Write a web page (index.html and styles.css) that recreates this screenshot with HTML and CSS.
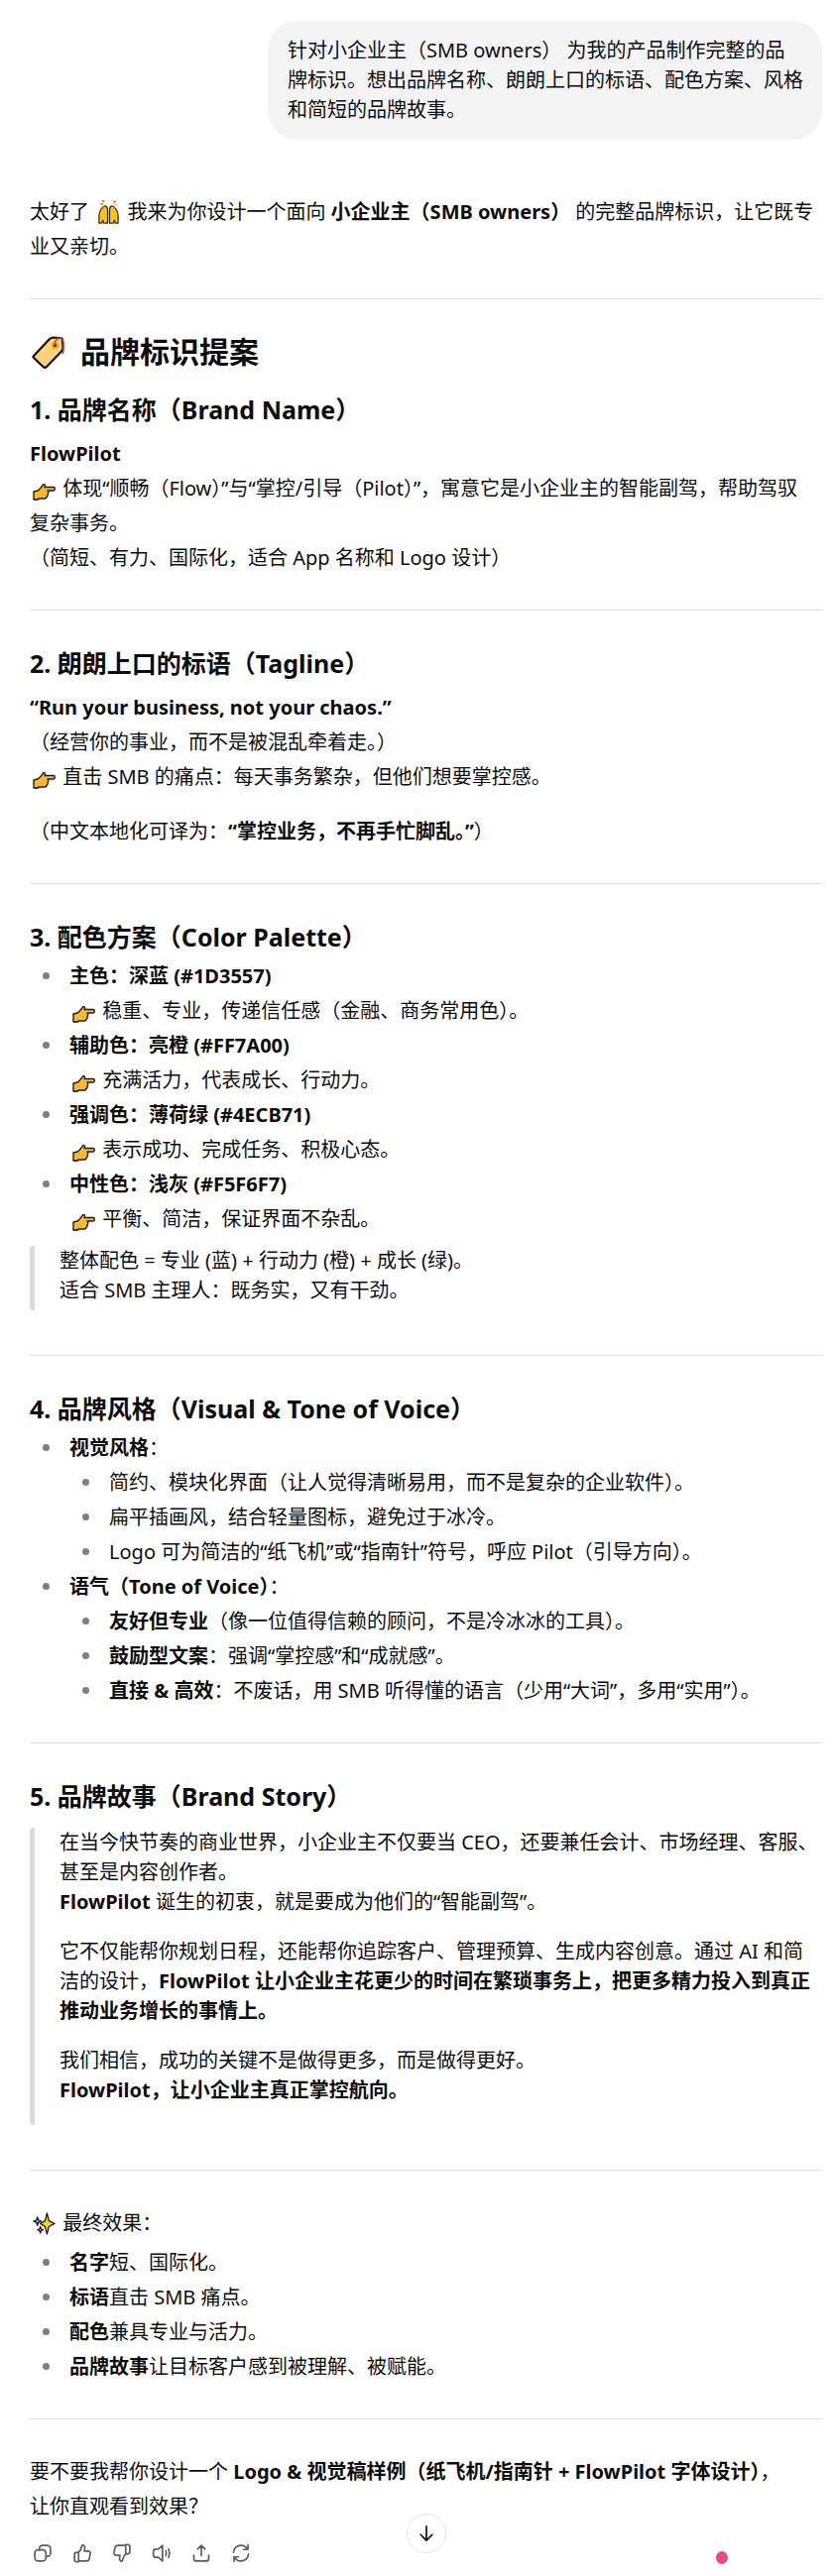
FILE: index.html
```html
<!DOCTYPE html>
<html lang="zh-CN">
<head>
<meta charset="utf-8">
<title>FlowPilot</title>
<link rel="stylesheet" href="styles.css">
</head>
<body>
<svg class="defs" width="0" height="0" aria-hidden="true">
  <defs>
    <symbol id="hand" viewBox="0 0 25 25">
      <g transform="translate(1 7)">
        <path d="M1 16.500h4.500l1.500-1.500" fill="none" stroke="#9a9a9a" stroke-width="1.200"/>
        <path d="M1 8l4-1C7 6 9 3 10.500 1 11.500 0 13 .8 12.500 2.500L12 3.500h9c1.800 0 1.800 3.500 0 3.500h-6c1 1 1 3 0 3.300.5.700.3 2.200-.7 2.700-.3 1.200-.8 2-2.300 2H6l-1 1H1z" fill="#fdb92e" stroke="#1c1c1c" stroke-width="1.400" stroke-linejoin="round"/>
      </g>
    </symbol>
  </defs>
</svg>
<main class="thread">
  <div class="bubble">针对小企业主（SMB owners） 为我的产品制作完整的品牌标识。想出品牌名称、朗朗上口的标语、配色方案、风格和简短的品牌故事。</div>

  <article class="reply">
    <p>太好了 <svg class="emoji" viewBox="0 0 26 26"><path d="M6 5a7 7 0 0 1 14 0" fill="none" stroke="#e8792b" stroke-width="3" stroke-dasharray="2 1.500"/><path d="M3 24v-8c0-4 3-9 6-10 2 0 3 2 3 5v13H8l-1-3-1 3zM23 24v-8c0-4-3-9-6-10-2 0-3 2-3 5v13h4l1-3 1 3z" fill="#fcc21b" stroke="#3a2a10" stroke-width="1.300" stroke-linejoin="round"/></svg> 我来为你设计一个面向 <strong>小企业主（SMB owners）</strong> 的完整品牌标识，让它既专业又亲切。</p>
    <hr>
    <h2><svg class="emoji emoji-large" viewBox="0 0 36 36"><path d="M3 22L19 5c1-1 2-1.500 3.500-1.500L30 4c1.500 0 2 1 2 2.500l.5 7.500c0 1.500-.5 2.500-1.500 3.500L16 33c-1 1-2.500 1-3.500 0L3 24c-.8-.7-.8-1.300 0-2z" fill="#ffd27a" stroke="#111" stroke-width="2.200" stroke-linejoin="round"/><circle cx="24.500" cy="11.500" r="3.500" fill="#e8a020"/><circle cx="24.500" cy="11.500" r="1.500" fill="#3a2a10"/><path d="M24 11c0-7 9-10 9-2 0 3 0 8-.5 11" fill="none" stroke="#d8342a" stroke-width="1.500"/></svg>品牌标识提案</h2>
    <h3>1. 品牌名称（Brand Name）</h3>
    <p><strong>FlowPilot</strong><br><svg class="emoji"><use href="#hand"/></svg> 体现“顺畅（Flow）”与“掌控/引导（Pilot）”，寓意它是小企业主的智能副驾，帮助驾驭<br>复杂事务。<br>（简短、有力、国际化，适合 App 名称和 Logo 设计）</p>
    <hr>
    <h3>2. 朗朗上口的标语（Tagline）</h3>
    <p><strong>“Run your business, not your chaos.”</strong><br>（经营你的事业，而不是被混乱牵着走。）<br><svg class="emoji"><use href="#hand"/></svg> 直击 SMB 的痛点：每天事务繁杂，但他们想要掌控感。</p>
    <p class="spaced">（中文本地化可译为：<strong>“掌控业务，不再手忙脚乱。”</strong>）</p>
    <hr>
    <h3>3. 配色方案（Color Palette）</h3>
    <ul>
      <li><strong>主色：深蓝 (#1D3557)</strong><br><svg class="emoji"><use href="#hand"/></svg> 稳重、专业，传递信任感（金融、商务常用色）。</li>
      <li><strong>辅助色：亮橙 (#FF7A00)</strong><br><svg class="emoji"><use href="#hand"/></svg> 充满活力，代表成长、行动力。</li>
      <li><strong>强调色：薄荷绿 (#4ECB71)</strong><br><svg class="emoji"><use href="#hand"/></svg> 表示成功、完成任务、积极心态。</li>
      <li><strong>中性色：浅灰 (#F5F6F7)</strong><br><svg class="emoji"><use href="#hand"/></svg> 平衡、简洁，保证界面不杂乱。</li>
    </ul>
    <blockquote>
      <p>整体配色 = 专业 (蓝) + 行动力 (橙) + 成长 (绿)。<br>适合 SMB 主理人：既务实，又有干劲。</p>
    </blockquote>
    <hr>
    <h3>4. 品牌风格（Visual &amp; Tone of Voice）</h3>
    <ul>
      <li><strong>视觉风格</strong>：
        <ul>
          <li>简约、模块化界面（让人觉得清晰易用，而不是复杂的企业软件）。</li>
          <li>扁平插画风，结合轻量图标，避免过于冰冷。</li>
          <li>Logo 可为简洁的“纸飞机”或“指南针”符号，呼应 Pilot（引导方向）。</li>
        </ul>
      </li>
      <li><strong>语气（Tone of Voice）</strong>：
        <ul>
          <li><strong>友好但专业</strong>（像一位值得信赖的顾问，不是冷冰冰的工具）。</li>
          <li><strong>鼓励型文案</strong>：强调“掌控感”和“成就感”。</li>
          <li><strong>直接 &amp; 高效</strong>：不废话，用 SMB 听得懂的语言（少用“大词”，多用“实用”）。</li>
        </ul>
      </li>
    </ul>
    <hr>
    <h3>5. 品牌故事（Brand Story）</h3>
    <blockquote class="story">
      <p>在当今快节奏的商业世界，小企业主不仅要当 CEO，还要兼任会计、市场经理、客服、甚至是内容创作者。<br><strong>FlowPilot</strong> 诞生的初衷，就是要成为他们的“智能副驾”。</p>
      <p>它不仅能帮你规划日程，还能帮你追踪客户、管理预算、生成内容创意。通过 AI 和简洁的设计，<strong>FlowPilot 让小企业主花更少的时间在繁琐事务上，把更多精力投入到真正推动业务增长的事情上。</strong></p>
      <p>我们相信，成功的关键不是做得更多，而是做得更好。<br><strong>FlowPilot，让小企业主真正掌控航向。</strong></p>
    </blockquote>
    <hr>
    <p><svg class="emoji" viewBox="0 0 26 26"><path d="M16 2l2 8 6 3-6 3-2 8-2-8-5-3 5-3z" fill="#ffd60a" stroke="#111" stroke-width="1.300" stroke-linejoin="round"/><path d="M6 6l1 3 3 1.500-3 1.500-1 3-1-3-3-1.500 3-1.500z" fill="#35b8e0" stroke="#111" stroke-width="1.200" stroke-linejoin="round"/><path d="M9 16l.8 2.500 2.200 1-2.200 1L9 23l-.8-2.500-2.200-1 2.200-1z" fill="#f28bb0" stroke="#111" stroke-width="1.200" stroke-linejoin="round"/></svg> 最终效果：</p>
    <ul class="tight">
      <li><strong>名字</strong>短、国际化。</li>
      <li><strong>标语</strong>直击 SMB 痛点。</li>
      <li><strong>配色</strong>兼具专业与活力。</li>
      <li><strong>品牌故事</strong>让目标客户感到被理解、被赋能。</li>
    </ul>
    <hr>
    <p>要不要我帮你设计一个 <strong>Logo &amp; 视觉稿样例（纸飞机/指南针 + FlowPilot 字体设计）</strong>，<br>让你直观看到效果？</p>
  </article>

  <div class="actions">
    <svg class="action" viewBox="0 0 24 24"><rect x="2.500" y="8" width="13.500" height="13.500" rx="4"/><path d="M8 8V6.500a4 4 0 0 1 4-4h5.500a4 4 0 0 1 4 4V12a4 4 0 0 1-4 4H16"/></svg>
    <svg class="action" viewBox="0 0 24 24"><path d="M7.500 11c2.500-2 3.500-5 4-8 .2-1.500 4-1 3.500 3l-.5 3.500h4.500c2 0 3 1.500 2.700 3l-1.200 6c-.4 2-1.500 3-3.500 3H7.500zM7.500 11v11.500H5.500a3 3 0 0 1-3-3v-5.500a3 3 0 0 1 3-3z"/></svg>
    <svg class="action" viewBox="0 0 24 24"><path d="M16.500 13c-2.500 2-3.500 5-4 8-.2 1.500-4 1-3.500-3l.5-3.500H5c-2 0-3-1.500-2.700-3l1.200-6c.4-2 1.500-3 3.500-3h9.500zM16.500 13V1.500h2a3 3 0 0 1 3 3V10a3 3 0 0 1-3 3z"/></svg>
    <svg class="action" viewBox="0 0 24 24"><path d="M13 2.500v19L8 17H5a3 3 0 0 1-3-3v-4a3 3 0 0 1 3-3h3zM17 9c.8 2 .8 4 0 6M20.500 7c1.300 3.300 1.300 6.700 0 10"/></svg>
    <svg class="action" viewBox="0 0 24 24"><path d="M12 15V2.500M7.500 7L12 2.500 16.500 7M3 14.500v4a3 3 0 0 0 3 3h12a3 3 0 0 0 3-3v-4"/></svg>
    <svg class="action" viewBox="0 0 24 24"><path d="M3 11c0-5 4-8.500 9-8.500 3.500 0 6 1.500 8 4.500M20.500 2v5.500H15M21 13c0 5-4 8.500-9 8.500-3.500 0-6-1.500-8-4.500M3.500 22v-5.500H9"/></svg>
  </div>
</main>
<button class="scroll-down" type="button" aria-label="scroll to bottom"><svg viewBox="0 0 24 24"><path d="M12 3.500v17M5 13.500l7 7 7-7"/></svg></button>
<span class="dot"></span>
</body>
</html>
```

FILE: styles.css
```css
* {
  box-sizing: border-box;
}

html,
body {
  margin: 0;
  height: 2599px;
  overflow: hidden;
  background: #fff;
}

body {
  position: relative;
  font-family: "Noto Sans", "Noto Sans CJK SC", sans-serif;
  font-size: 20px;
  line-height: 35px;
  color: #0d0d0d;
}

.defs {
  position: absolute;
}

.thread {
  display: flex;
  flex-direction: column;
  padding: 21px 11px 0 30px;
}

.bubble {
  align-self: flex-end;
  width: 559px;
  padding: 15px 19px 15px 20px;
  border-radius: 30px;
  background: #f4f4f4;
  line-height: 30px;
}

.reply {
  margin-top: 55px;
}

p {
  margin: 0;
}

p.spaced {
  margin-top: 20px;
}

hr + p {
  padding-top: 2px;
}

strong {
  font-weight: 700;
}

hr {
  height: 1px;
  margin: 35px 0 33px;
  border: 0;
  background: #dedede;
}

h2 {
  display: flex;
  align-items: center;
  margin: 0 0 18px;
  font-size: 30px;
  line-height: 40px;
  font-weight: 700;
}

h3 {
  margin: 0 0 7px;
  font-size: 25px;
  line-height: 40px;
  font-weight: 700;
}

ul {
  margin: 0;
  padding: 0 0 0 40px;
  list-style: none;
}

li {
  position: relative;
}

li::before {
  content: "";
  position: absolute;
  left: -27px;
  top: 14px;
  width: 7px;
  height: 7px;
  border-radius: 50%;
  background: #808080;
}

h3 + ul {
  margin-top: -5px;
}

ul.tight {
  margin-top: 5px;
}

blockquote {
  margin: 10px 0 45px;
  padding: 0 0 5px 25px;
  border-left: 5px solid #dcdcdc;
  border-radius: 3px;
  line-height: 30px;
}

blockquote p + p {
  margin-top: 20px;
}

blockquote + hr {
  margin-top: 0;
}

h3 + blockquote {
  margin-top: 12px;
}

blockquote.story {
  padding-bottom: 20px;
}

.emoji {
  display: inline-block;
  width: 25px;
  height: 25px;
  margin: 0 1px 0 2px;
  vertical-align: -6px;
}

.emoji-large {
  flex: none;
  width: 36px;
  height: 36px;
  margin: 0 14px 0 1px;
}

.actions {
  display: flex;
  gap: 20px;
  margin-top: 20px;
  padding-left: 3px;
}

.action {
  width: 20px;
  height: 20px;
  fill: none;
  stroke: #5d5d5d;
  stroke-width: 2;
  stroke-linecap: round;
  stroke-linejoin: round;
}

.scroll-down {
  position: absolute;
  left: 410px;
  top: 2536px;
  display: flex;
  align-items: center;
  justify-content: center;
  width: 40px;
  height: 40px;
  padding: 0;
  border: 1px solid #e3e3e3;
  border-radius: 50%;
  background: #fff;
}

.scroll-down svg {
  width: 20px;
  height: 20px;
  fill: none;
  stroke: #0d0d0d;
  stroke-width: 2;
  stroke-linecap: round;
  stroke-linejoin: round;
}

.dot {
  position: absolute;
  left: 722px;
  top: 2574px;
  width: 12px;
  height: 13px;
  border-radius: 50%;
  background: #ec4a84;
}
```
